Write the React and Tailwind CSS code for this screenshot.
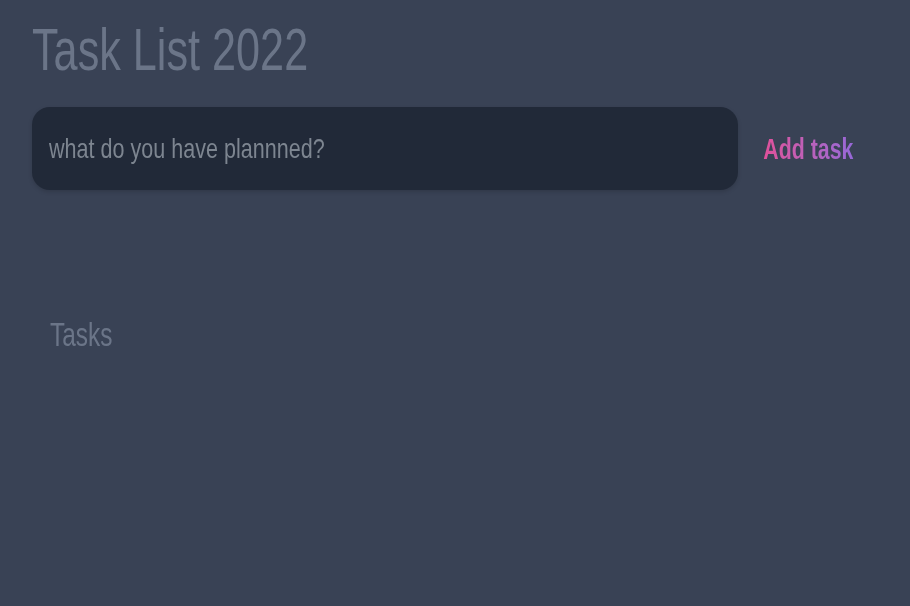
import React from 'react';

const font = { fontFamily: '"Liberation Sans", Arial, sans-serif' };

const App = () => {
  return (
    <div className="min-h-screen w-full bg-[#394255] px-8" style={font}>
      {/* Title */}
      <h1 className="pt-[20px] text-[60px] leading-none text-[#6b7588] whitespace-nowrap">
        <span className="inline-block origin-left scale-x-[0.72]">Task List 2022</span>
      </h1>

      {/* Input row */}
      <div className="mt-[27px] flex items-center">
        <div className="flex h-[83px] w-[706px] items-center rounded-[18px] bg-[#212938] pl-[17px] shadow-[0_2px_4px_rgba(0,0,0,0.15)]">
          <span className="inline-block origin-left scale-x-[0.77] whitespace-nowrap text-[28px] leading-none text-[#7d8590]">
            what do you have plannned?
          </span>
        </div>
        <button className="flex flex-1 justify-center">
          <span className="inline-block scale-x-[0.71] whitespace-nowrap bg-gradient-to-r from-[#e0509a] to-[#9668d8] bg-clip-text text-[30px] font-bold leading-none text-transparent">
            Add task
          </span>
        </button>
      </div>

      {/* Tasks section */}
      <div className="mt-[128px] pl-[18px]">
        <h2 className="text-[33px] leading-none text-[#6b7588] whitespace-nowrap">
          <span className="inline-block origin-left scale-x-[0.74]">Tasks</span>
        </h2>
      </div>
    </div>
  );
};

export default App;
